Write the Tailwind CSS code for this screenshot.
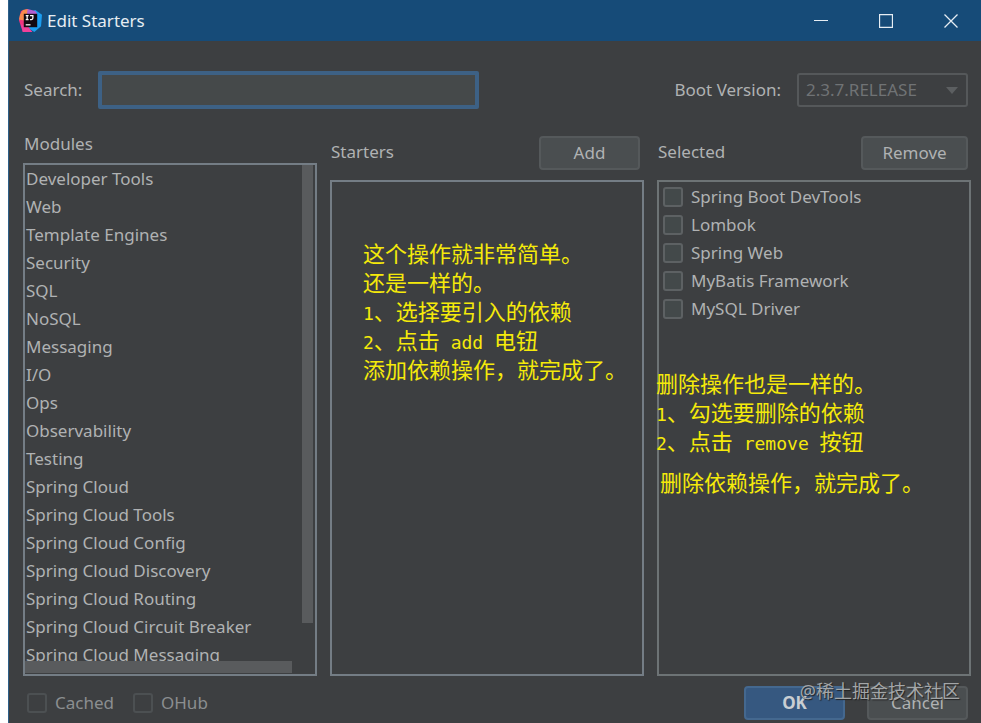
<!DOCTYPE html>
<html lang="zh-CN">
  <head>
    <meta charset="UTF-8" />
    <meta name="viewport" content="width=device-width, initial-scale=1.0" />
    <title>Edit Starters</title>
    <script src="https://cdn.jsdelivr.net/npm/@tailwindcss/browser@4"></script>
  </head>
  <body class="h-screen overflow-hidden bg-white pl-2 font-['Noto_Sans','Noto_Sans_CJK_SC',sans-serif] text-[17px] text-[#b0b2b3]">
    <div class="relative flex h-full flex-col border-l border-[#2d5f88] bg-[#3d3f41]">
      <!-- title bar -->
      <header class="flex h-[41px] shrink-0 items-center bg-[#164b78] pl-[10px] text-[#e6edf3]">
        <svg class="mr-[5px] size-[23px]" viewBox="0 0 24 24" aria-hidden="true">
          <path d="M2 2L9 0L13 5L10 23L4 24L2 18L0 12Z" fill="#f0357f" />
          <path d="M1 6L4 1L9 0L12 5L5 12L0 11Z" fill="#f98a4d" />
          <path d="M10 4L17 1L24 6L23 18L16 24L10 20Z" fill="#1b9df0" />
          <path d="M9 0L17 2L19 5L8 7Z" fill="#b35fd0" />
          <path d="M2 16L10 19L14 24L4 24Z" fill="#f0409a" />
          <rect x="5" y="5" width="14" height="14" fill="#120a12" />
          <path d="M7 7H10M8.500 7V11M7 11H10M11.500 7H14.500V9.500Q14.500 11 13 11H11.500" fill="none" stroke="#fff" stroke-width="1.300" />
          <path d="M7 16.500H12" stroke="#fff" stroke-width="1.300" />
        </svg>
        <h1>Edit Starters</h1>
        <div class="ml-auto flex h-full gap-[5px]">
          <button class="grid w-[60px] place-items-center" aria-label="Minimize">
            <svg class="size-[14px]" viewBox="0 0 14 14"><path d="M0 6.500H14" stroke="currentColor" /></svg>
          </button>
          <button class="grid w-[60px] place-items-center" aria-label="Maximize">
            <svg class="size-[14px]" viewBox="0 0 14 14"><path d="M.500 .500H13.500V13.500H.500Z" fill="none" stroke="currentColor" stroke-width="1.300" /></svg>
          </button>
          <button class="grid w-[60px] place-items-center" aria-label="Close">
            <svg class="size-[14px]" viewBox="0 0 14 14"><path d="M.500 .500L13.500 13.500M13.500 .500L.500 13.500" stroke="currentColor" stroke-width="1.300" /></svg>
          </button>
        </div>
      </header>

      <!-- search and version -->
      <div class="flex shrink-0 items-center pt-[30px] pr-[13px] pl-[15px]">
        <label for="search" class="w-[74px]">Search:</label>
        <input
          id="search"
          type="text"
          class="h-[38px] w-[41%] max-w-[381px] rounded-[2px] border-4 border-[#3d6185] bg-[#45494a] px-2 outline-none"
        />
        <label for="version" class="mr-4 ml-auto">Boot Version:</label>
        <div class="relative w-[171px]">
          <select
            id="version"
            disabled
            class="h-[34px] w-full appearance-none rounded-[3px] border-2 border-[#55585a] bg-transparent pl-[7px] text-[#707375] opacity-100"
          >
            <option>2.3.7.RELEASE</option>
          </select>
          <svg class="pointer-events-none absolute top-[14px] right-[10px] h-[7px] w-[12px]" viewBox="0 0 12 7"><path d="M0 0H12L6 7Z" fill="#5c5f61" /></svg>
        </div>
      </div>

      <!-- three lists -->
      <main class="grid min-h-0 flex-1 grid-cols-[294fr_314fr_314fr] gap-x-[13px] pt-[22px] pr-[10px] pl-[14px]">
        <section class="flex min-h-0 min-w-0 flex-col">
          <h2 class="h-8 pl-px leading-[26px]">Modules</h2>
          <div class="relative min-h-0 flex-1 overflow-hidden border-2 border-[#747d85]">
            <ul class="px-px leading-[28px] whitespace-nowrap">
              <li>Developer Tools</li>
              <li>Web</li>
              <li>Template Engines</li>
              <li>Security</li>
              <li>SQL</li>
              <li>NoSQL</li>
              <li>Messaging</li>
              <li>I/O</li>
              <li>Ops</li>
              <li>Observability</li>
              <li>Testing</li>
              <li>Spring Cloud</li>
              <li>Spring Cloud Tools</li>
              <li>Spring Cloud Config</li>
              <li>Spring Cloud Discovery</li>
              <li>Spring Cloud Routing</li>
              <li>Spring Cloud Circuit Breaker</li>
              <li>Spring Cloud Messaging</li>
            </ul>
            <div class="absolute inset-x-0 bottom-0 h-[13px] bg-[#3d3f41]">
              <div class="h-[12px] w-[92%] bg-[#595b5d]"></div>
            </div>
            <div class="absolute top-0 right-[2px] h-[90%] w-[11px] bg-[#595b5d]"></div>
          </div>
        </section>

        <section class="flex min-h-0 min-w-0 flex-col">
          <div class="flex h-[49px] items-start justify-between pt-[5px] pr-1 pl-px">
            <h2 class="leading-8">Starters</h2>
            <button class="h-[34px] w-[101px] rounded-[4px] border-2 border-[#55595b] bg-[#4a4e50]">Add</button>
          </div>
          <div class="min-h-0 flex-1 border-2 border-[#747d85]"></div>
        </section>

        <section class="flex min-h-0 min-w-0 flex-col">
          <div class="flex h-[49px] items-start justify-between pt-[5px] pr-[3px] pl-px">
            <h2 class="leading-8">Selected</h2>
            <button class="h-[34px] w-[107px] rounded-[4px] border-2 border-[#55595b] bg-[#4a4e50]">Remove</button>
          </div>
          <div class="min-h-0 flex-1 border-2 border-[#6d7375] pt-px pl-1 leading-[28px]">
            <label class="flex items-center gap-2">
              <input type="checkbox" class="size-5 appearance-none rounded-[3px] border-2 border-[#5d6163] bg-[#43494a]" />
              Spring Boot DevTools
            </label>
            <label class="flex items-center gap-2">
              <input type="checkbox" class="size-5 appearance-none rounded-[3px] border-2 border-[#5d6163] bg-[#43494a]" />
              Lombok
            </label>
            <label class="flex items-center gap-2">
              <input type="checkbox" class="size-5 appearance-none rounded-[3px] border-2 border-[#5d6163] bg-[#43494a]" />
              Spring Web
            </label>
            <label class="flex items-center gap-2">
              <input type="checkbox" class="size-5 appearance-none rounded-[3px] border-2 border-[#5d6163] bg-[#43494a]" />
              MyBatis Framework
            </label>
            <label class="flex items-center gap-2">
              <input type="checkbox" class="size-5 appearance-none rounded-[3px] border-2 border-[#5d6163] bg-[#43494a]" />
              MySQL Driver
            </label>
          </div>
        </section>
      </main>

      <!-- footer -->
      <footer class="flex h-[47px] shrink-0 items-start pt-[10px] pr-[13px] pl-[18px]">
        <label class="mr-[19px] flex h-[34px] items-center gap-2 text-[#8b8e90]">
          <input type="checkbox" disabled class="size-5 appearance-none rounded-[3px] border-2 border-[#4c5052]" />
          Cached
        </label>
        <label class="flex h-[34px] items-center gap-2 text-[#8b8e90]">
          <input type="checkbox" disabled class="size-5 appearance-none rounded-[3px] border-2 border-[#4c5052]" />
          OHub
        </label>
        <button class="mr-[22px] ml-auto h-[34px] w-[101px] rounded-[4px] border-2 border-[#44688f] bg-[#365880] font-bold text-[#c9ced3]">OK</button>
        <button class="h-[34px] w-[101px] rounded-[4px] border-2 border-[#55595b] bg-[#4a4e50]">Cancel</button>
      </footer>

      <!-- notes on top of the dialog -->
      <div class="pointer-events-none absolute top-[238px] left-[354px] font-['Noto_Sans_CJK_SC',sans-serif] text-[22px] leading-[29px] whitespace-nowrap text-[#f5ea0a]">
        <p>这个操作就非常简单。</p>
        <p>还是一样的。</p>
        <p><span class="font-['DejaVu_Sans_Mono',monospace] text-[18px] leading-none">1</span>、选择要引入的依赖</p>
        <p><span class="font-['DejaVu_Sans_Mono',monospace] text-[18px] leading-none">2</span>、点击<span class="font-['DejaVu_Sans_Mono',monospace] text-[18px] leading-none"> add </span>电钮</p>
        <p>添加依赖操作，就完成了。</p>
      </div>
      <div class="pointer-events-none absolute top-[368px] left-[647px] font-['Noto_Sans_CJK_SC',sans-serif] text-[22px] leading-[29px] whitespace-nowrap text-[#f5ea0a]">
        <p>删除操作也是一样的。</p>
        <p><span class="font-['DejaVu_Sans_Mono',monospace] text-[18px] leading-none">1</span>、勾选要删除的依赖</p>
        <p><span class="font-['DejaVu_Sans_Mono',monospace] text-[18px] leading-none">2</span>、点击<span class="font-['DejaVu_Sans_Mono',monospace] text-[18px] leading-none"> remove </span>按钮</p>
        <p class="pt-3 pl-1">删除依赖操作，就完成了。</p>
      </div>
      <p class="pointer-events-none absolute right-[21px] bottom-[20px] text-[18px] leading-6 text-[#a3a6a8] text-shadow-[1px_1px_1px_#222]">@稀土掘金技术社区</p>
    </div>
  </body>
</html>
